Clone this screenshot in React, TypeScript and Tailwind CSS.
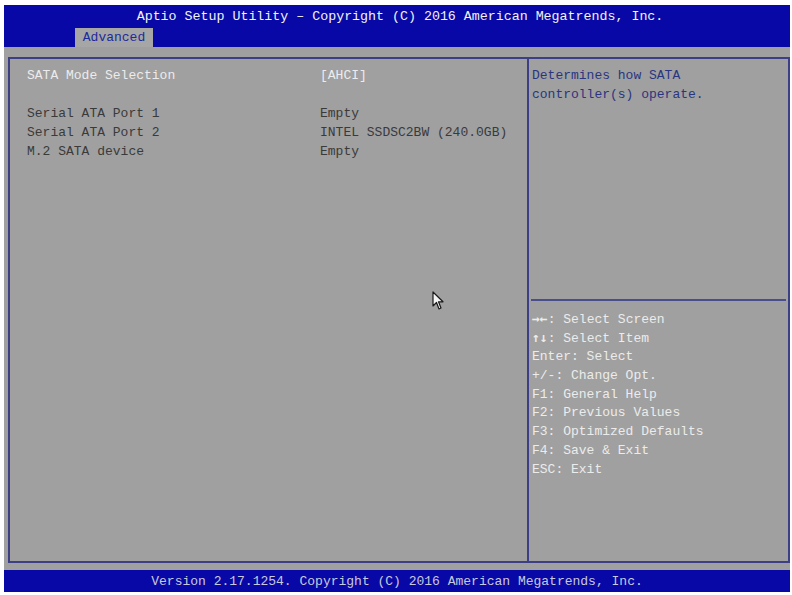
import { FC } from "react";

const mono = { fontFamily: '"Liberation Mono", "DejaVu Sans Mono", monospace' };
const arrows = { fontFamily: '"DejaVu Sans Mono", monospace' };

const rows = [
  { label: "Serial ATA Port 1", value: "Empty" },
  { label: "Serial ATA Port 2", value: "INTEL SSDSC2BW (240.0GB)" },
  { label: "M.2 SATA device", value: "Empty" },
];

const keys: { glyph?: string; text: string }[] = [
  { glyph: "\u2192\u2190", text: ": Select Screen" },
  { glyph: "\u2191\u2193", text: ": Select Item" },
  { text: "Enter: Select" },
  { text: "+/-: Change Opt." },
  { text: "F1: General Help" },
  { text: "F2: Previous Values" },
  { text: "F3: Optimized Defaults" },
  { text: "F4: Save & Exit" },
  { text: "ESC: Exit" },
];

const Cursor: FC = () => (
  <svg
    width="12"
    height="20"
    viewBox="0 0 12 20"
    className="absolute left-[432px] top-[291px]"
  >
    <path
      d="M1 1 L1 15 L4.5 11.5 L7 18 L9 17 L6.5 10.8 L11 10.8 Z"
      fill="#f4f4f4"
      stroke="#1a1a1a"
      strokeWidth="1.2"
      strokeLinejoin="round"
    />
  </svg>
);

const App: FC = () => {
  return (
    <div
      className="relative h-[595px] w-[792px] overflow-hidden bg-white pb-[3px] pl-[4px] pr-[2px] pt-[5px] text-[13px] leading-[19px]"
      style={mono}
    >
      <div className="flex h-full flex-col bg-[#a0a0a0]">
        <div className="flex h-[42px] flex-col bg-[#0808a6]">
          <div className="mt-[3px] h-[18px] pl-[6px] text-center text-[13.3px] leading-[18px] text-[#f2f2f2]">
            Aptio Setup Utility – Copyright (C) 2016 American Megatrends, Inc.
          </div>
          <div className="ml-[71px] mt-[2px] flex h-[19px] w-[78px] items-center justify-center bg-[#a6a6a6] text-[#1c2a9c]">
            Advanced
          </div>
        </div>
        <div className="ml-[4px] mt-[10px] flex h-[506px] border-2 border-[#3c3f86]">
          <div className="w-[517px] pl-[17px] pt-[7px]">
            <div className="grid grid-cols-[293px_1fr] text-[#ececec]">
              <span>SATA Mode Selection</span>
              <span>[AHCI]</span>
            </div>
            <div className="h-[19px]" />
            {rows.map((row) => (
              <div
                key={row.label}
                className="grid grid-cols-[293px_1fr] text-[#3a3a3a]"
              >
                <span>{row.label}</span>
                <span>{row.value}</span>
              </div>
            ))}
          </div>
          <div className="flex flex-1 flex-col border-l-2 border-[#3c3f86]">
            <div className="h-[240px] pl-[3px] pt-[7px] text-[#2a3580]">
              <div>Determines how SATA</div>
              <div>controller(s) operate.</div>
            </div>
            <div className="mx-[2px] h-[2px] bg-[#4a4d8c]" />
            <div className="pl-[3px] pt-[10px] text-[#ececec]">
              {keys.map((k) => (
                <div
                  key={k.text}
                  className="flex h-[18.7px] items-center leading-[18.7px]"
                >
                  {k.glyph && (
                    <span
                      className="-mt-[4px] font-bold leading-none"
                      style={arrows}
                    >
                      {k.glyph}
                    </span>
                  )}
                  <span className="whitespace-pre">{k.text}</span>
                </div>
              ))}
            </div>
          </div>
        </div>
        <div className="mt-[7px] flex h-[22px] items-center justify-center bg-[#0808a6] text-[13px] text-[#c9c9dd]">
          Version 2.17.1254. Copyright (C) 2016 American Megatrends, Inc.
        </div>
      </div>
      <Cursor />
    </div>
  );
};

export default App;
